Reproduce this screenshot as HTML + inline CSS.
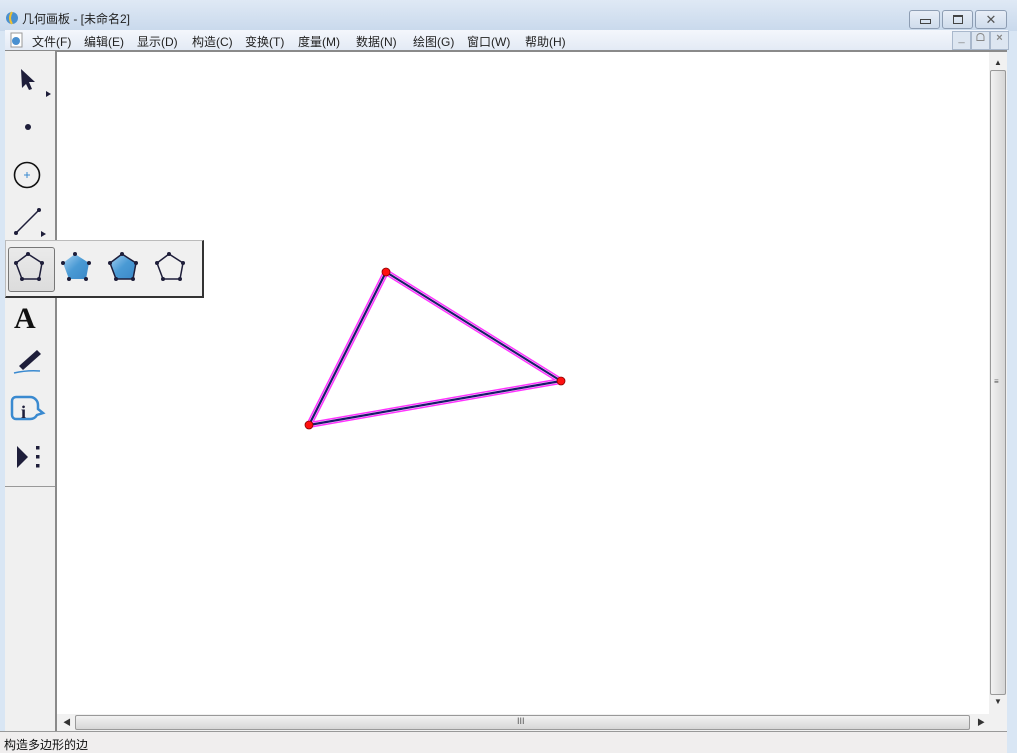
<!DOCTYPE html>
<html><head><meta charset="utf-8"><style>
body{margin:0;width:1017px;height:752px;overflow:hidden;background:#d9e6f4;font-family:"Liberation Sans","Noto Sans CJK SC",sans-serif;position:relative}
.abs{position:absolute}
.title{left:0;top:0;width:1017px;height:31px;background:linear-gradient(#dfe9f5,#c9d9ec)}
.menu{left:5px;top:30px;width:1003px;height:20px;background:linear-gradient(#f4f7fc,#e3eaf5);font-size:12px;color:#222}
.menu span{position:absolute;top:3px}
.btn{border:1px solid #8d9db3;border-radius:3px;background:linear-gradient(#e8eef7,#cfdcec);height:17px;top:10px}
.tb{left:5px;top:51px;width:50px;height:680px;background:#f0f0f0;border-right:2px solid #8a8a8a}
</style></head><body>
<div class="abs title"></div>
<svg class="abs" style="left:4px;top:10px" width="16" height="16"><circle cx="8" cy="8" r="6" fill="#4a90d0"/><path d="M8 2 Q4 8 8 14" stroke="#f0c030" stroke-width="2" fill="none"/></svg>
<div class="abs" style="left:22px;top:10px;font-size:12px;color:#222">几何画板 - [未命名2]</div>
<div class="abs btn" style="left:909px;width:29px"><div class="abs" style="left:10px;top:8px;width:9px;height:3px;border:1px solid #444"></div></div>
<div class="abs btn" style="left:942px;width:29px"><div class="abs" style="left:10px;top:4px;width:8px;height:6px;border:1px solid #444;border-top-width:2px"></div></div>
<div class="abs btn" style="left:975px;width:30px;font-size:13px;text-align:center;line-height:17px;color:#555">✕</div>
<div class="abs menu">
<svg class="abs" style="left:5px;top:2px" width="14" height="16"><rect x="1" y="1" width="11" height="14" fill="#fff" stroke="#999"/><circle cx="6" cy="9" r="4" fill="#4a90d0"/></svg>
<span style="left:27px">文件(F)</span><span style="left:79px">编辑(E)</span><span style="left:132px">显示(D)</span><span style="left:187px">构造(C)</span><span style="left:240px">变换(T)</span><span style="left:293px">度量(M)</span><span style="left:351px">数据(N)</span><span style="left:408px">绘图(G)</span><span style="left:462px">窗口(W)</span><span style="left:520px">帮助(H)</span>
<div class="abs" style="left:947px;top:1px;width:17px;height:17px;border:1px solid #a9b8cc;background:#dde6f1;text-align:center;font-size:11px;color:#888">_</div>
<div class="abs" style="left:966px;top:1px;width:17px;height:17px;border:1px solid #a9b8cc;background:#dde6f1;text-align:center;font-size:11px;color:#888">ᗝ</div>
<div class="abs" style="left:985px;top:1px;width:17px;height:17px;border:1px solid #a9b8cc;background:#dde6f1;text-align:center;font-size:11px;color:#888;font-weight:bold">×</div>
</div>
<div class="abs" style="left:5px;top:50px;width:1002px;height:2px;background:#8a8a8a"></div>
<div class="abs tb"></div>
<div class="abs" style="left:57px;top:52px;width:932px;height:662px;background:#fff"></div>
<!-- vertical scrollbar -->
<div class="abs" style="left:989px;top:52px;width:18px;height:662px;background:#f1f1f1"></div>
<div class="abs" style="left:990px;top:70px;width:14px;height:623px;border:1px solid #999;border-radius:2px;background:linear-gradient(90deg,#f2f2f2,#d6d6d6)"></div>
<div class="abs" style="left:994px;top:58px;font-size:8px;color:#333">▲</div>
<div class="abs" style="left:994px;top:697px;font-size:8px;color:#333">▼</div>
<div class="abs" style="left:994px;top:377px;font-size:8px;color:#555">≡</div>
<!-- horizontal scrollbar -->
<div class="abs" style="left:57px;top:714px;width:950px;height:17px;background:#f1f1f1"></div>
<div class="abs" style="left:75px;top:715px;width:893px;height:13px;border:1px solid #999;border-radius:2px;background:linear-gradient(#f2f2f2,#d6d6d6)"></div>
<div class="abs" style="left:63px;top:717px;font-size:8px;color:#333">◀</div>
<div class="abs" style="left:977px;top:717px;font-size:8px;color:#333">▶</div>
<div class="abs" style="left:517px;top:716px;font-size:9px;color:#555">III</div>
<!-- status -->
<div class="abs" style="left:0;top:731px;width:1007px;height:21px;background:#f0eeee;border-top:1px solid #999"></div>
<div class="abs" style="left:4px;top:736px;font-size:12px;color:#111">构造多边形的边</div>
<!-- tools -->
<svg class="abs" style="left:5px;top:60px" width="52" height="420">
<path d="M16 9 L30 22 L24 22 L27 29 L24 30 L21 24 L17 28 Z" fill="#1e1e3a"/>
<path d="M41 31 L46 34 L41 37Z" fill="#1e1e3a"/>
<circle cx="23" cy="67" r="3" fill="#1e1e3a"/>
<circle cx="22" cy="115" r="12.5" fill="none" stroke="#111" stroke-width="1.6"/>
<path d="M19 115h6M22 112v6" stroke="#3a8ad0"/>
<path d="M11 173 L34 150" stroke="#1e1e3a" stroke-width="1.5"/><circle cx="11" cy="173" r="2" fill="#1e1e3a"/><circle cx="34" cy="150" r="2" fill="#1e1e3a"/>
<path d="M36 171 L41 174 L36 177Z" fill="#1e1e3a"/>
<text x="9" y="268" font-family="Liberation Serif" font-weight="bold" font-size="30" fill="#111">A</text>
<path d="M14 306 L32 290 L36 294 L18 310Z" fill="#1e1e3a"/><path d="M9 313 Q22 310 35 311" stroke="#3a8ad0" stroke-width="1.6" fill="none"/>
<path d="M11 337 h14 a8 8 0 0 1 8 8 v4 l5 4 l-6 2 a8 8 0 0 1 -7 4 h-14 a4 4 0 0 1 -4 -4 v-14 a4 4 0 0 1 4 -4z" fill="none" stroke="#3a8ad0" stroke-width="2.5"/>
<text x="16" y="358" font-family="Liberation Serif" font-weight="bold" font-size="18" fill="#1e1e3a">i</text>
<path d="M12 386 L23 397 L12 408Z" fill="#1e1e3a"/><rect x="31" y="386" width="3.5" height="3.5" fill="#1e1e3a"/><rect x="31" y="395" width="3.5" height="3.5" fill="#1e1e3a"/><rect x="31" y="404" width="3.5" height="3.5" fill="#1e1e3a"/>
</svg>
<div class="abs" style="left:5px;top:486px;width:50px;height:1px;background:#999"></div>
<!-- popup -->
<div class="abs" style="left:5px;top:240px;width:196px;height:55px;background:#f0f0f0;border:1px solid #bbb;border-right:2px solid #333;border-bottom:2px solid #333"></div>
<div class="abs" style="left:8px;top:247px;width:45px;height:43px;border:1px solid #777;border-radius:3px;background:linear-gradient(#eaeaea,#dcdcdc)"></div>
<svg class="abs" style="left:0;top:240px" width="210" height="60">
<g stroke="#1e1e3a" stroke-width="1.5" fill="none"><path d="M28 14 L42 23 L39 39 L22 39 L16 23Z"/><path d="M169 14 L183 23 L180 39 L163 39 L157 23Z"/></g>
<defs><linearGradient id="g" x1="0" y1="0" x2="1" y2="1"><stop offset="0" stop-color="#a9d3f2"/><stop offset=".5" stop-color="#4a9ad4"/><stop offset="1" stop-color="#3a88c8"/></linearGradient></defs>
<path d="M75 14 L89 23 L86 39 L69 39 L63 23Z" fill="url(#g)"/>
<path d="M122 14 L136 23 L133 39 L116 39 L110 23Z" fill="url(#g)" stroke="#1e1e3a" stroke-width="1.5"/>
<g fill="#1e1e3a"><circle cx="28" cy="14" r="2"/><circle cx="42" cy="23" r="2"/><circle cx="39" cy="39" r="2"/><circle cx="22" cy="39" r="2"/><circle cx="16" cy="23" r="2"/>
<circle cx="75" cy="14" r="2"/><circle cx="89" cy="23" r="2"/><circle cx="86" cy="39" r="2"/><circle cx="69" cy="39" r="2"/><circle cx="63" cy="23" r="2"/>
<circle cx="122" cy="14" r="2"/><circle cx="136" cy="23" r="2"/><circle cx="133" cy="39" r="2"/><circle cx="116" cy="39" r="2"/><circle cx="110" cy="23" r="2"/>
<circle cx="169" cy="14" r="2"/><circle cx="183" cy="23" r="2"/><circle cx="180" cy="39" r="2"/><circle cx="163" cy="39" r="2"/><circle cx="157" cy="23" r="2"/></g>
</svg>
<!-- triangle -->
<svg class="abs" style="left:0;top:0" width="1017" height="752">
<path d="M386 272 L561 381 L309 425Z" fill="none" stroke="#ff33ff" stroke-width="6" stroke-linejoin="round"/>
<path d="M386 272 L561 381 L309 425Z" fill="none" stroke="#fff" stroke-width="3" stroke-linejoin="round"/>
<path d="M386 272 L561 381 L309 425Z" fill="none" stroke="#1a1a6a" stroke-width="2.2" stroke-linejoin="round"/>
<g fill="#ff1010" stroke="#800" stroke-width="0.8"><circle cx="386" cy="272" r="4"/><circle cx="561" cy="381" r="4"/><circle cx="309" cy="425" r="4"/></g>
</svg>
</body></html>
